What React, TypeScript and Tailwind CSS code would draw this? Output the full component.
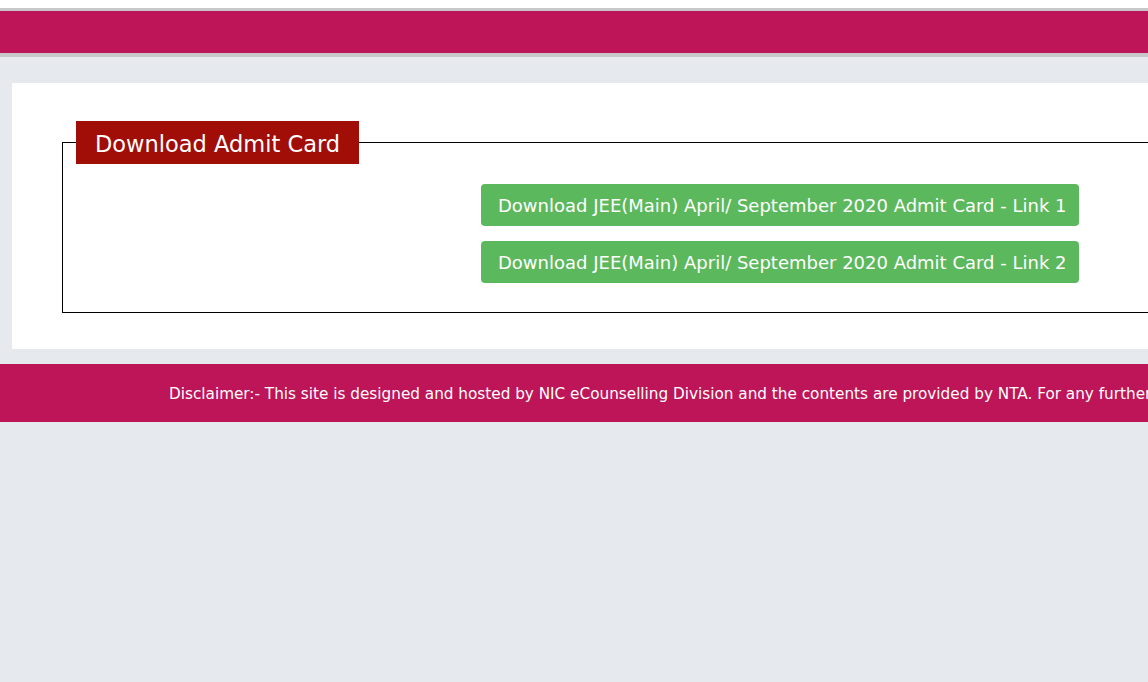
import React from "react";

export default function App() {
  const font = { fontFamily: '"DejaVu Sans", Verdana, sans-serif' };
  return (
    <div className="w-full h-[682px] overflow-hidden bg-[#e6e9ee]" style={font}>
      <div className="w-[1400px]">
        <div className="h-[8px] bg-white" />
        <div className="h-[3px] bg-[#c8c8ca]" />
        <div className="h-[42px] bg-[#bd1558]" />
        <div className="h-[4px] bg-[#c8c8ca]" />
        <div className="h-[26px]" />
        <div className="ml-[12px] bg-white pl-[50px] pt-[38px] pb-[36px]">
          <fieldset className="border border-black px-[13px] pb-[29px] w-[1300px]">
            <legend className="bg-[#a10d07] text-white text-[22.5px] leading-[46px] h-[43px] overflow-hidden px-[19px] w-[283px] whitespace-nowrap">
              Download Admit Card
            </legend>
            <div className="ml-[405px] mt-[20px] flex flex-col gap-[15px]">
              <div className="w-[598px] h-[42px] rounded-[4px] bg-[#5cb85c] text-white text-[18px] leading-[43px] pl-[17px] whitespace-nowrap">
                Download JEE(Main) April/ September 2020 Admit Card - Link 1
              </div>
              <div className="w-[598px] h-[42px] rounded-[4px] bg-[#5cb85c] text-white text-[18px] leading-[43px] pl-[17px] whitespace-nowrap">
                Download JEE(Main) April/ September 2020 Admit Card - Link 2
              </div>
            </div>
          </fieldset>
        </div>
        <div className="h-[15px]" />
        <div className="h-[58px] bg-[#bd1558] text-white text-[15.25px] leading-[60px] pl-[169px] whitespace-nowrap">
          Disclaimer:- This site is designed and hosted by NIC eCounselling Division and the contents are provided by NTA. For any further queries, please contact NTA.
        </div>
      </div>
    </div>
  );
}
